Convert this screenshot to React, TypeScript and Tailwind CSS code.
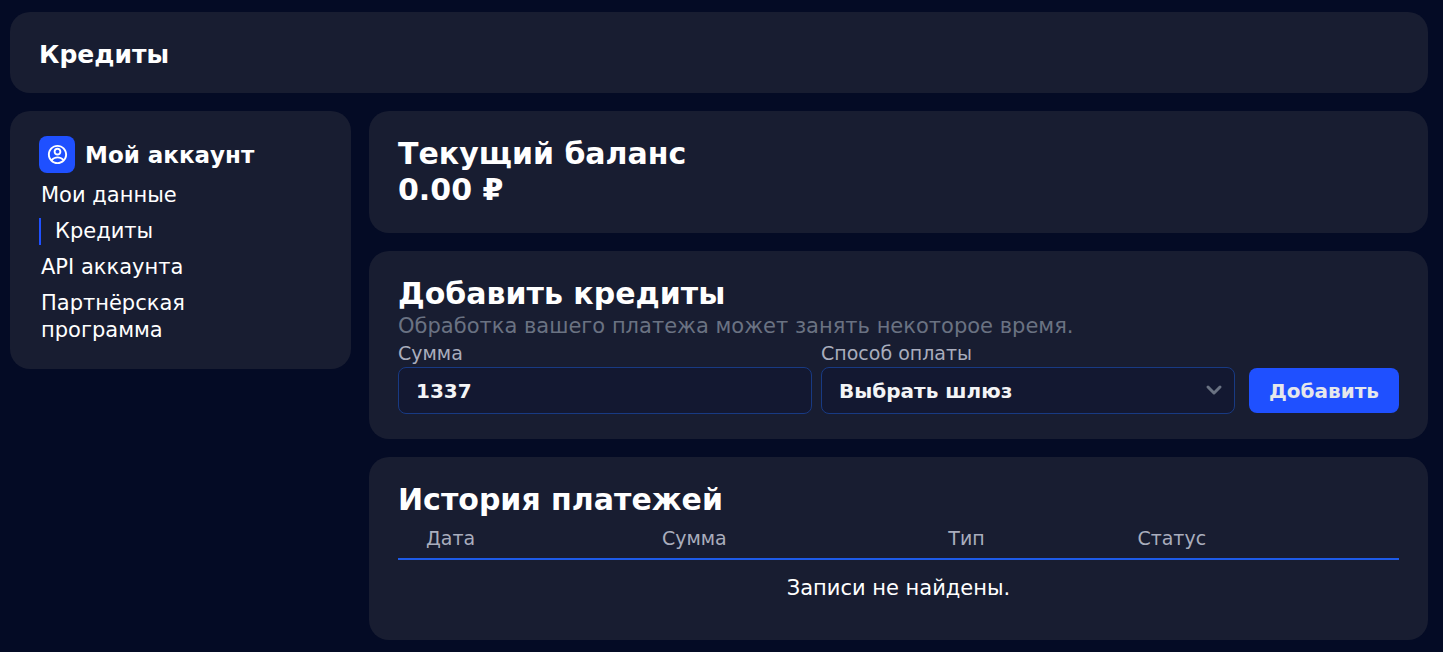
import React from "react";
import { RiAccountCircleLine } from "react-icons/ri";

const card = "rounded-[20px] bg-[#181d31] px-[29px] py-[25px]";
const heading = "text-[30px] leading-9 font-bold";
const label = "block text-[19px] leading-[27px] text-[#a9adbd]";
const field =
  "h-[47px] w-full rounded-lg border border-[#183a83] bg-[#131831] px-[17px] text-[20px] font-bold text-gray-100 outline-none";

const links = ["Мои данные", "Кредиты", "API аккаунта", "Партнёрская программа"];
const columns = [
  { title: "Дата", width: "w-[10.5%]" },
  { title: "Сумма", width: "w-[38.2%]" },
  { title: "Тип", width: "w-[16.2%]" },
  { title: "Статус", width: "w-[24.8%]" },
  { title: "", width: "w-[10.3%]" },
];

function Sidebar() {
  return (
    <aside className={card}>
      <div className="flex items-center gap-[10px]">
        <span className="flex h-[37px] w-9 items-center justify-center rounded-lg bg-[#1f50ff]">
          <RiAccountCircleLine className="h-[23px] w-[23px]" />
        </span>
        <h2 className="text-[23px] leading-7 font-bold">Мой аккаунт</h2>
      </div>
      <nav className="mt-[9px] flex flex-col gap-[9px]">
        {links.map((text) => (
          <a
            key={text}
            href="#"
            className={
              text === "Кредиты"
                ? "border-l-2 border-[#1f50ff] pl-[14px] text-[21px] leading-[27px]"
                : "max-w-[220px] border-l-2 border-transparent text-[21px] leading-[27px]"
            }
          >
            {text}
          </a>
        ))}
      </nav>
    </aside>
  );
}

function AddCredits() {
  return (
    <section className={card}>
      <h2 className={heading}>Добавить кредиты</h2>
      <p className="text-[21px] leading-7 text-gray-500">
        Обработка вашего платежа может занять некоторое время.
      </p>
      <form className="flex items-end gap-[14px]" onSubmit={(e) => e.preventDefault()}>
        <div className="grid flex-1 grid-cols-2 gap-[9px]">
          <div>
            <label htmlFor="amount" className={label}>
              Сумма
            </label>
            <input id="amount" type="text" defaultValue="1337" className={field} />
          </div>
          <div>
            <label htmlFor="gateway" className={label}>
              Способ оплаты
            </label>
            <div className="relative">
              <select id="gateway" className={field + " appearance-none"}>
                <option>Выбрать шлюз</option>
              </select>
              <svg
                viewBox="0 0 20 20"
                className="pointer-events-none absolute top-2 right-[6px] h-[30px] w-[30px] fill-gray-500"
                aria-hidden="true"
              >
                <path d="M5.293 7.293a1 1 0 011.414 0L10 10.586l3.293-3.293a1 1 0 111.414 1.414l-4 4a1 1 0 01-1.414 0l-4-4a1 1 0 010-1.414z" />
              </svg>
            </div>
          </div>
        </div>
        <button
          type="submit"
          className="mb-px h-[45px] w-[150px] rounded-lg bg-[#1f50ff] text-[20px] font-bold text-gray-200"
        >
          Добавить
        </button>
      </form>
    </section>
  );
}

function History() {
  return (
    <section className={card}>
      <h2 className={heading}>История платежей</h2>
      <table className="w-full table-fixed border-collapse text-center">
        <thead>
          <tr className="h-[41px] border-b-2 border-[#1e5be8]">
            {columns.map((c) => (
              <th key={c.title} className={c.width + " text-[19px] leading-6 font-normal text-[#a9adbd]"}>
                {c.title}
              </th>
            ))}
          </tr>
        </thead>
        <tbody>
          <tr className="h-14">
            <td colSpan={5} className="text-[21px] leading-7">
              Записи не найдены.
            </td>
          </tr>
        </tbody>
      </table>
    </section>
  );
}

export default function App() {
  return (
    <div className="min-h-screen bg-[#040b25] pt-3 pr-[15px] pb-3 pl-[10px] font-['DejaVu_Sans',sans-serif] text-white">
      <header className="mb-[18px] rounded-[20px] bg-[#181d31] px-[29px] pt-6 pb-5">
        <h1 className="text-[25px] leading-[37px] font-bold">Кредиты</h1>
      </header>
      <div className="grid grid-cols-4 items-start gap-[18px]">
        <Sidebar />
        <main className="col-span-3 flex flex-col gap-[18px]">
          <section className={card}>
            <h2 className={heading}>Текущий баланс</h2>
            <p className={heading}>0.00 ₽</p>
          </section>
          <AddCredits />
          <History />
        </main>
      </div>
    </div>
  );
}
